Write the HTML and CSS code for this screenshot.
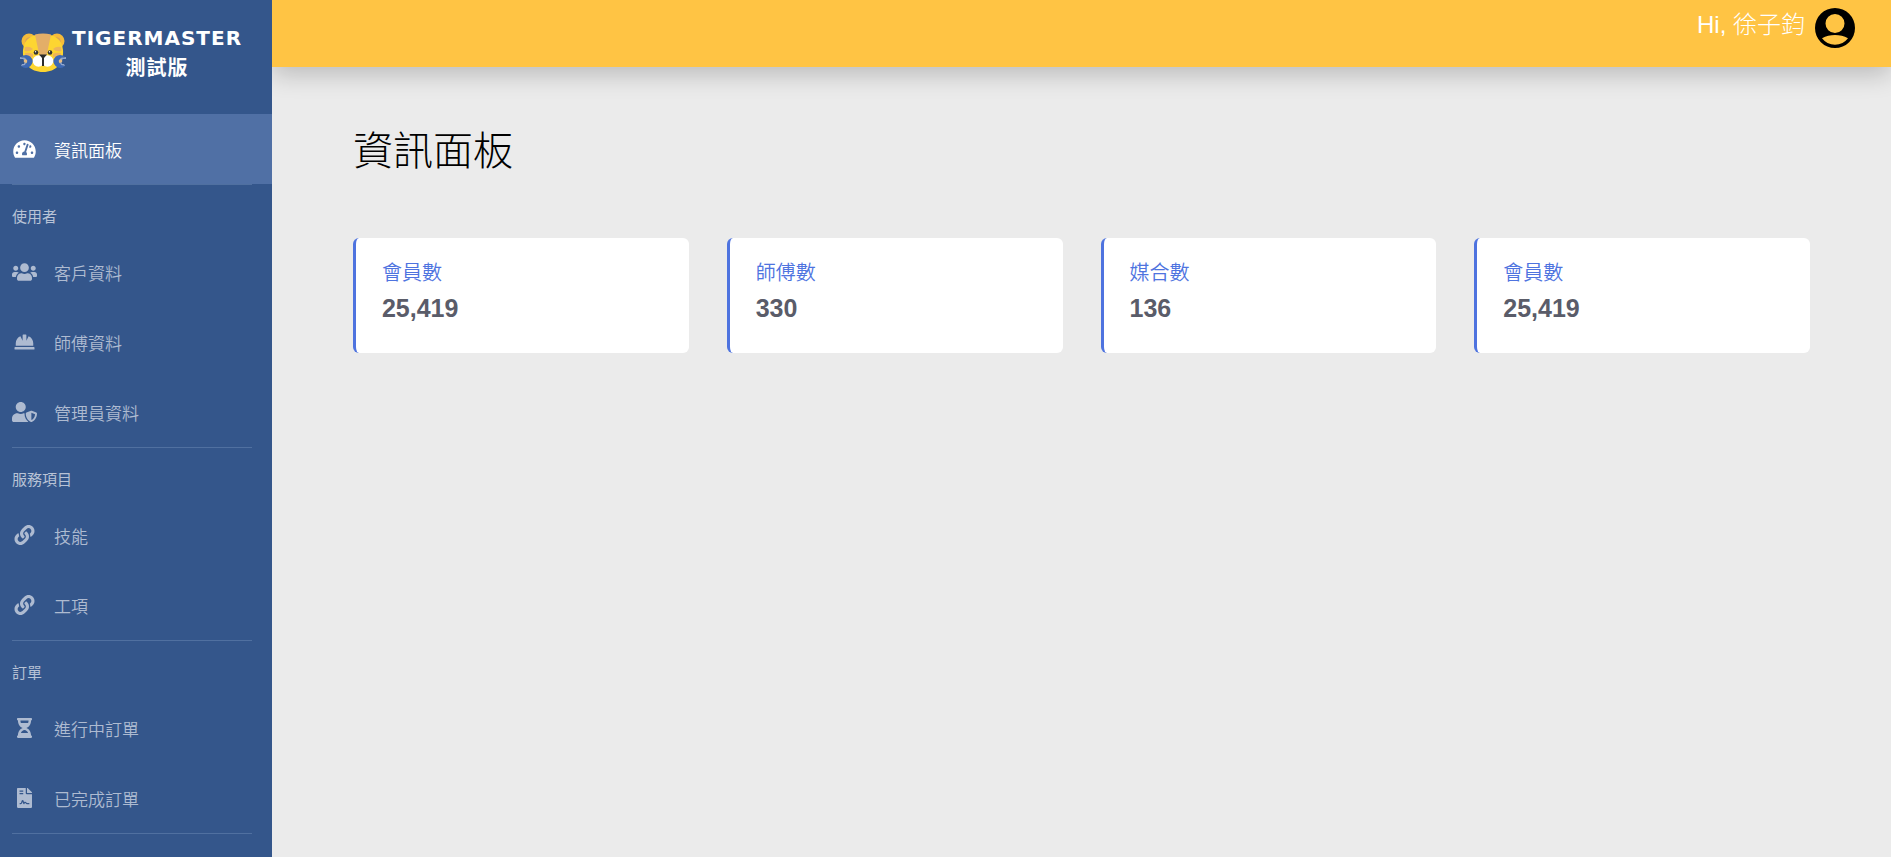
FILE: index.html
```html
<!DOCTYPE html>
<html lang="zh-Hant">
<head>
<meta charset="utf-8">
<meta name="viewport" content="width=device-width, initial-scale=1">
<title>TIGERMASTER 測試版</title>
<link rel="stylesheet" href="styles.css">
</head>
<body>
<div class="layout">
  <nav class="sidebar" aria-label="主選單">
    <a class="brand" href="#">
      <svg class="brand-logo" viewBox="0 0 46 40" aria-hidden="true">
        <circle cx="9" cy="8" r="7.500" fill="#f5bb3a"/><circle cx="37" cy="8" r="7.500" fill="#f5bb3a"/>
        <circle cx="9.500" cy="8.500" r="4.200" fill="#d9a05a"/><circle cx="36.500" cy="8.500" r="4.200" fill="#d9a05a"/>
        <path d="M23 1C12 1 4 6 3 17c-1 13 7 22 20 22s21-9 20-22C42 6 34 1 23 1z" fill="#fdd531"/>
        <path d="M15 1.500Q23-.5 31 1.500L26.500 23h-7z" fill="#e3ae68"/>
        <path d="M5 14q5-1 8 2-3 3-8.500 2zM41 14q-5-1-8 2 3 3 8.500 2zM5 20q5-1 8 1v3l-8-1zM41 20q-5-1-8 1v3l8-1z" fill="#edb45a"/>
        <path d="M1 24q2-2 5-2 5 0 7 6-2 7-7 7-3 0-5-2l4-1 2-3-2-4zM45 24q-2-2-5-2-5 0-7 6 2 7 7 7 3 0 5-2l-4-1-2-3 2-4z" fill="#3d68b4"/>
        <path d="M0 24l5 1 2 3-2 4-4 1 1-2h2l1-3-2-2-3 0zM46 24l-5 1-2 3 2 4 4 1-1-2h-2l-1-3 2-2 3 0z" fill="#8ea5cf"/>
        <circle cx="5.500" cy="28" r="1.800" fill="#e9bd83"/><circle cx="40.500" cy="28" r="1.800" fill="#e9bd83"/>
        <circle cx="18.500" cy="28" r="5.800" fill="#fff"/><circle cx="27.500" cy="28" r="5.800" fill="#fff"/>
        <circle cx="16" cy="19.500" r="2.300" fill="#333"/><circle cx="30" cy="19.500" r="2.300" fill="#333"/>
        <circle cx="15.500" cy="18.800" r=".7" fill="#fff"/><circle cx="29.500" cy="18.800" r=".7" fill="#fff"/>
        <path d="M19 21.500h8l-3 3.500v8h-2v-8z" fill="#2b2b2b"/>
      </svg>
      <span class="brand-text">TIGERMASTER<br>測試版</span>
    </a>

    <a class="item item-active" href="#" aria-current="page">
      <svg class="icon" viewBox="0 0 576 512" aria-hidden="true"><path d="M288 32C128.940 32 0 160.940 0 320c0 52.800 14.250 102.260 39.060 144.800 5.610 9.620 16.300 15.200 27.440 15.200h443c11.140 0 21.830-5.580 27.440-15.200C561.750 422.260 576 372.800 576 320c0-159.060-128.940-288-288-288zm0 64c14.710 0 26.580 10.130 30.320 23.650-1.110 2.260-2.640 4.230-3.450 6.670l-9.220 27.670c-5.130 3.490-10.970 6.010-17.640 6.010-17.670 0-32-14.330-32-32S270.330 96 288 96zM96 384c-17.670 0-32-14.330-32-32s14.330-32 32-32 32 14.330 32 32-14.330 32-32 32zm48-160c-17.670 0-32-14.330-32-32s14.330-32 32-32 32 14.330 32 32-14.330 32-32 32zm246.770-72.410l-61.330 184C343.130 347.330 352 364.540 352 384c0 11.720-3.380 22.550-8.880 32H232.880c-5.500-9.450-8.880-20.280-8.880-32 0-33.940 26.500-61.430 59.900-63.590l61.340-184.010c4.170-12.560 17.730-19.450 30.360-15.170 12.570 4.190 19.350 17.790 15.170 30.360zm14.660 57.200l15.520-46.550c3.470-1.290 7.130-2.230 11.050-2.230 17.670 0 32 14.330 32 32s-14.330 32-32 32c-11.380-.01-20.890-6.280-26.570-15.220zM480 384c-17.670 0-32-14.330-32-32s14.330-32 32-32 32 14.330 32 32-14.330 32-32 32z"/></svg>
      <span>資訊面板</span>
    </a>

    <section class="group">
      <h2 class="group-title">使用者</h2>
      <a class="item" href="#">
        <svg class="icon" viewBox="0 0 640 512" aria-hidden="true"><path d="M96 224c35.300 0 64-28.700 64-64s-28.700-64-64-64-64 28.700-64 64 28.700 64 64 64zm448 0c35.300 0 64-28.700 64-64s-28.700-64-64-64-64 28.700-64 64 28.700 64 64 64zm32 32h-64c-17.600 0-33.500 7.100-45.100 18.600 40.300 22.100 68.900 62 75.100 109.400h66c17.700 0 32-14.300 32-32v-32c0-35.300-28.700-64-64-64zm-256 0c61.900 0 112-50.100 112-112S381.900 32 320 32 208 82.100 208 144s50.100 112 112 112zm76.800 32h-8.300c-20.800 10-43.900 16-68.500 16s-47.600-6-68.500-16h-8.300C179.600 288 128 339.600 128 403.200V432c0 26.500 21.500 48 48 48h288c26.500 0 48-21.500 48-48v-28.800c0-63.600-51.600-115.200-115.200-115.200zm-223.700-13.400C161.500 263.100 145.600 256 128 256H64c-35.300 0-64 28.700-64 64v32c0 17.700 14.300 32 32 32h65.900c6.300-47.400 34.900-87.300 75.200-109.400z"/></svg>
        <span>客戶資料</span>
      </a>
      <a class="item" href="#">
        <svg class="icon" viewBox="0 0 512 512" aria-hidden="true"><path d="M480 288c0-80.250-49.280-148.920-119.190-177.620L304 224V80a16 16 0 0 0-16-16h-64a16 16 0 0 0-16 16v144l-56.810-113.620C81.280 139.080 32 207.750 32 288v64h448zm16 96H16a16 16 0 0 0-16 16v32a16 16 0 0 0 16 16h480a16 16 0 0 0 16-16v-32a16 16 0 0 0-16-16z"/></svg>
        <span>師傅資料</span>
      </a>
      <a class="item" href="#">
        <svg class="icon" viewBox="0 0 640 512" aria-hidden="true"><path d="M622.300 271.100l-115.200-45c-4.100-1.600-12.600-3.700-22.200 0l-115.200 45c-10.700 4.200-17.700 14-17.700 24.900 0 111.600 68.700 188.800 132.900 213.900 9.600 3.700 18 1.600 22.200 0C558.400 489.900 640 420.500 640 296c0-10.900-7-20.700-17.700-24.900zM496 462.400V273.300l95.500 37.300c-5.600 87.100-60.900 135.400-95.500 151.800zM224 256c70.700 0 128-57.300 128-128S294.700 0 224 0 96 57.300 96 128s57.300 128 128 128zm96 40c0-2.500.8-4.800 1.100-7.200-2.500-.1-4.900-.8-7.500-.8h-16.700c-22.200 10.200-46.900 16-72.900 16s-50.600-5.800-72.900-16h-16.700C60.200 288 0 348.200 0 422.400V464c0 26.500 21.500 48 48 48h352c6.800 0 13.300-1.500 19.200-4-54-42.900-99.200-116.700-99.200-212z"/></svg>
        <span>管理員資料</span>
      </a>
    </section>

    <section class="group">
      <h2 class="group-title">服務項目</h2>
      <a class="item" href="#">
        <svg class="icon" viewBox="0 0 512 512" aria-hidden="true"><path id="link-shape" d="M326.612 185.391c59.747 59.809 58.927 155.698.36 214.590-.11.12-.24.25-.36.37l-67.200 67.200c-59.270 59.270-155.699 59.262-214.960 0-59.270-59.260-59.270-155.700 0-214.960l37.106-37.106c9.840-9.840 26.786-3.300 27.294 10.606.648 17.722 3.826 35.527 9.690 52.721 1.986 5.822.567 12.262-3.783 16.612l-13.087 13.087c-28.026 28.026-28.905 73.660-1.155 101.960 28.024 28.579 74.086 28.749 102.325.51l67.200-67.190c28.191-28.191 28.073-73.757 0-101.830-3.701-3.694-7.429-6.564-10.341-8.569a16.037 16.037 0 0 1-6.947-12.606c-.396-10.567 3.348-21.456 11.698-29.806l21.054-21.055c5.521-5.521 14.182-6.199 20.584-1.731a152.482 152.482 0 0 1 20.522 17.197zM467.547 44.449c-59.261-59.262-155.690-59.270-214.960 0l-67.200 67.200c-.12.12-.25.25-.36.37-58.566 58.892-59.387 154.781.36 214.590a152.454 152.454 0 0 0 20.521 17.196c6.402 4.468 15.064 3.789 20.584-1.731l21.054-21.055c8.350-8.350 12.094-19.239 11.698-29.806a16.037 16.037 0 0 0-6.947-12.606c-2.912-2.005-6.640-4.875-10.341-8.569-28.073-28.073-28.191-73.639 0-101.830l67.200-67.190c28.239-28.239 74.300-28.069 102.325.51 27.750 28.300 26.872 73.934-1.155 101.960l-13.087 13.087c-4.350 4.350-5.769 10.790-3.783 16.612 5.864 17.194 9.042 34.999 9.690 52.721.509 13.906 17.454 20.446 27.294 10.606l37.106-37.106c59.271-59.259 59.271-155.699.001-214.959z"/></svg>
        <span>技能</span>
      </a>
      <a class="item" href="#">
        <svg class="icon" viewBox="0 0 512 512" aria-hidden="true"><use href="#link-shape"/></svg>
        <span>工項</span>
      </a>
    </section>

    <section class="group">
      <h2 class="group-title">訂單</h2>
      <a class="item" href="#">
        <svg class="icon" viewBox="0 0 384 512" aria-hidden="true"><path d="M360 0H24C10.745 0 0 10.745 0 24v16c0 13.255 10.745 24 24 24 0 90.965 51.016 167.734 120.842 192C75.016 280.266 24 357.035 24 448c-13.255 0-24 10.745-24 24v16c0 13.255 10.745 24 24 24h336c13.255 0 24-10.745 24-24v-16c0-13.255-10.745-24-24-24 0-90.965-51.016-167.734-120.842-192C308.984 231.734 360 154.965 360 64c13.255 0 24-10.745 24-24V24c0-13.255-10.745-24-24-24zm-75.078 384H99.080c17.059-46.797 52.096-80 92.920-80 40.821 0 75.862 33.196 92.922 80zm.019-256H99.078C91.988 108.548 88 86.748 88 64h208c0 22.805-3.987 44.587-11.059 64z"/></svg>
        <span>進行中訂單</span>
      </a>
      <a class="item" href="#">
        <svg class="icon" viewBox="0 0 384 512" aria-hidden="true"><path d="M224 136V0H24C10.700 0 0 10.700 0 24v464c0 13.300 10.700 24 24 24h336c13.300 0 24-10.700 24-24V160H248c-13.200 0-24-10.800-24-24zM64 72c0-4.420 3.580-8 8-8h80c4.420 0 8 3.580 8 8v16c0 4.420-3.580 8-8 8H72c-4.420 0-8-3.580-8-8V72zm0 64c0-4.420 3.580-8 8-8h80c4.420 0 8 3.580 8 8v16c0 4.420-3.580 8-8 8H72c-4.420 0-8-3.580-8-8v-16zm192.810 248H304c8.840 0 16 7.160 16 16s-7.160 16-16 16h-47.190c-16.450 0-31.270-9.140-38.640-23.860-2.950-5.920-8.090-6.520-10.170-6.520s-7.220.59-10.020 6.190l-7.670 15.340a15.986 15.986 0 0 1-14.310 8.840c-.38 0-.75-.02-1.140-.05-6.450-.45-12-4.750-14.030-10.890L144 354.590l-10.610 31.880c-5.890 17.660-22.380 29.530-41 29.530H80c-8.840 0-16-7.160-16-16s7.160-16 16-16h12.390c4.830 0 9.110-3.080 10.640-7.660l18.190-54.640c3.300-9.810 12.440-16.410 22.780-16.410s19.480 6.590 22.770 16.410l13.880 41.640c19.770-16.190 54.050-9.700 66 14.160 2.020 4.060 5.960 6.500 10.160 6.500zM377 105L279.100 7c-4.500-4.500-10.600-7-17-7H256v128h128v-6.100c0-6.300-2.500-12.400-7-16.900z"/></svg>
        <span>已完成訂單</span>
      </a>
    </section>
    <hr class="divider">
  </nav>

  <div class="content">
    <header class="topbar">
      <span class="greeting">Hi, 徐子鈞</span>
      <button class="avatar" type="button" aria-label="帳號">
        <svg viewBox="0 0 40 40" aria-hidden="true"><path fill-rule="evenodd" d="M20 0a20 20 0 1 0 0 40 20 20 0 0 0 0-40zM20 6a9.500 9.500 0 0 1 0 19 9.500 9.500 0 0 1 0-19zM7 30.300Q13 27 20 27t13 3.300Q28 36.800 20 36.800T7 30.300z"/></svg>
      </button>
    </header>
    <main class="main">
      <h1 class="title">資訊面板</h1>
      <div class="cards">
        <article class="card"><h2 class="card-label">會員數</h2><p class="card-value">25,419</p></article>
        <article class="card"><h2 class="card-label">師傅數</h2><p class="card-value">330</p></article>
        <article class="card"><h2 class="card-label">媒合數</h2><p class="card-value">136</p></article>
        <article class="card"><h2 class="card-label">會員數</h2><p class="card-value">25,419</p></article>
      </div>
    </main>
  </div>
</div>
</body>
</html>
```

FILE: styles.css
```css
* {
  box-sizing: border-box;
}

body {
  margin: 0;
  background: #ebebeb;
  color: #000;
  font-family: "Liberation Sans", "Noto Sans CJK TC", sans-serif;
  font-weight: 300;
}

h1,
h2,
p {
  margin: 0;
}

.layout {
  display: flex;
  min-height: 100vh;
}

/* Sidebar */
.sidebar {
  flex: none;
  width: 272px;
  background: #34568b;
}

.brand {
  display: flex;
  align-items: center;
  gap: 6px;
  height: 114px;
  padding: 0 20px 8px;
  color: #fff;
  text-decoration: none;
}

.brand-logo {
  flex: none;
  width: 46px;
  height: 40px;
}

.brand-text {
  font-family: "DejaVu Sans", "Noto Sans CJK TC", sans-serif;
  font-size: 20px;
  font-weight: 700;
  line-height: 30px;
  letter-spacing: 1px;
  text-align: center;
}

.item {
  display: flex;
  align-items: center;
  gap: 17px;
  height: 70px;
  padding: 0 12px;
  color: #aebbd1;
  font-size: 17px;
  font-weight: 350;
  text-decoration: none;
}

.item-active {
  background: #5070a5;
  color: #fff;
}

.icon {
  flex: none;
  width: 25px;
  height: 20px;
  fill: currentColor;
}

.group::before,
.divider {
  content: "";
  display: block;
  height: 1px;
  margin: 0 20px 0 12px;
  border: 0;
  background: #5070a0;
}

.group-title {
  padding: 21px 12px 9px;
  color: #b8c3d6;
  font-size: 15px;
  font-weight: 400;
  line-height: 22px;
}

/* Top bar */
.content {
  flex: 1;
  min-width: 0;
}

.topbar {
  display: flex;
  justify-content: flex-end;
  gap: 10px;
  height: 67px;
  padding: 8px 36px 0 20px;
  background: #ffc444;
  box-shadow: 0 8px 24px rgba(0, 0, 0, 0.2);
  clip-path: inset(0 0 -40px 0);
}

.greeting {
  color: #fff;
  font-size: 24px;
  line-height: 34px;
}

.avatar {
  width: 40px;
  height: 40px;
  padding: 0;
  border: 0;
  background: none;
}

.avatar svg {
  display: block;
}

/* Dashboard */
.main {
  padding: 54px 5%;
}

.title {
  font-size: 40px;
  font-weight: 300;
  line-height: 60px;
}

.cards {
  display: grid;
  grid-template-columns: repeat(4, 1fr);
  gap: 38px;
  margin-top: 57px;
}

.card {
  min-height: 115px;
  padding: 20px 26px;
  border-left: 3px solid #4e73df;
  border-radius: 6px;
  background: #fff;
}

.card-label {
  color: #4e73df;
  font-size: 20px;
  font-weight: 350;
  line-height: 30px;
}

.card-value {
  margin-top: 5px;
  color: #5a5c69;
  font-size: 25px;
  font-weight: 700;
  line-height: 30px;
}
```
